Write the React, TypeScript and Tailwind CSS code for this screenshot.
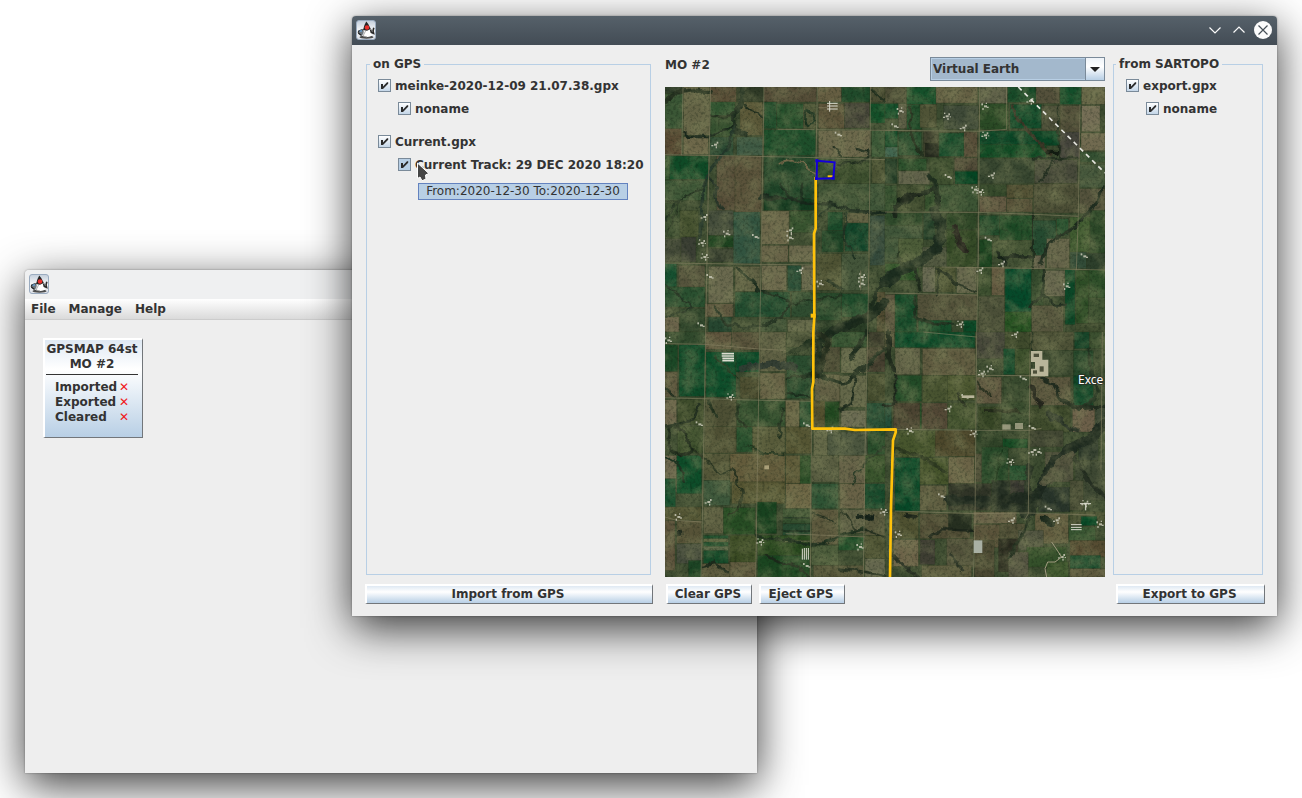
import React from "react";

type Field = [number, number, number, number, string];

// Farm fields: x, y, width, height, colour.
const FIELDS: Field[] = [
  // north-west
  [0, 0, 55, 20, "#2b3a28"], [0, 20, 55, 115, "#3a5635"], [0, 125, 50, 78, "#54442f"], [55, 0, 80, 145, "#656446"], [55, 150, 75, 52, "#6e684a"],
  [135, 0, 80, 45, "#564a34"], [135, 45, 75, 40, "#2f5430"], [135, 90, 75, 60, "#35502f"], [135, 150, 70, 55, "#2b4a33"], [215, 0, 80, 45, "#2f3a26"],
  [225, 45, 68, 100, "#5b5838"], [215, 150, 78, 55, "#3f5a44"], [297, 0, 158, 45, "#544c37"], [297, 45, 38, 80, "#1d4b2a"], [335, 50, 80, 75, "#244f2b"],
  [415, 50, 38, 75, "#4c5436"], [297, 128, 155, 78, "#1e4f2b"], [458, 0, 72, 45, "#665e42"], [530, 0, 85, 45, "#1f4a2a"], [615, 0, 45, 45, "#4a4d33"],
  [460, 50, 78, 75, "#5b5138"], [538, 48, 75, 75, "#454438"], [615, 50, 45, 58, "#145029"], [460, 130, 155, 80, "#6b664a"], [620, 130, 40, 80, "#3d5a38"],
  [0, 207, 130, 70, "#0f4a26"], [0, 207, 14, 70, "#3a5a34"], [0, 280, 125, 60, "#3b5535"], [155, 207, 60, 165, "#544a36"], [210, 207, 80, 170, "#5a523a"],
  [297, 207, 155, 130, "#1f4428"], [297, 335, 150, 35, "#143b20"], [455, 215, 55, 65, "#345030"], [510, 225, 105, 65, "#3d4f2e"], [620, 215, 40, 75, "#4a5233"],
  [460, 290, 155, 80, "#3e5335"], [615, 290, 45, 80, "#405639"], [0, 350, 45, 100, "#35492c"], [45, 370, 55, 80, "#45512f"], [130, 370, 75, 75, "#3e4738"],
  [130, 445, 75, 35, "#1e4420"], [130, 485, 80, 40, "#384030"], [205, 375, 80, 155, "#325440"], [290, 372, 82, 100, "#6c674a"], [375, 372, 75, 65, "#37532f"],
  [290, 475, 80, 50, "#655f45"], [372, 475, 75, 50, "#6b684c"], [488, 375, 45, 55, "#1a4a2a"], [540, 378, 70, 30, "#5e5c40"], [540, 408, 70, 85, "#12452a"],
  [470, 430, 65, 65, "#1f4427"], [615, 385, 45, 150, "#31473a"], [0, 455, 48, 70, "#424837"], [48, 450, 45, 75, "#3a3e33"], [455, 500, 75, 110, "#4e5233"],
  [530, 500, 80, 110, "#44553a"], [0, 530, 35, 70, "#165030"], [40, 535, 80, 78, "#55533c"], [130, 538, 75, 110, "#6a694e"], [210, 538, 75, 75, "#5f6043"],
  [290, 535, 75, 75, "#6c684c"], [368, 535, 40, 78, "#234a34"], [410, 535, 38, 75, "#64634a"], [0, 600, 120, 60, "#2a5030"], [120, 650, 85, 40, "#605940"],
  [210, 615, 165, 75, "#234d30"], [380, 615, 70, 75, "#2f4c30"], [455, 618, 75, 85, "#294a2c"], [530, 620, 80, 70, "#1d4a2a"], [635, 615, 25, 120, "#504a31"],
  [0, 690, 42, 45, "#6a624a"], [45, 665, 75, 70, "#32482d"], [130, 690, 70, 45, "#264630"], [285, 695, 80, 40, "#3f5236"], [368, 698, 78, 37, "#5c6044"],
  [455, 700, 155, 35, "#2a3d26"],
  // north-east
  [660, 0, 65, 48, "#4a4a34"], [725, 0, 88, 52, "#15502a"], [813, 0, 125, 48, "#645f43"], [660, 50, 40, 45, "#0f4d28"], [725, 52, 45, 75, "#204c2a"],
  [765, 52, 50, 70, "#4f5336"], [700, 50, 25, 75, "#5b5c45"], [835, 55, 105, 72, "#3f4a38"], [945, 0, 83, 50, "#5e5f48"], [1028, 0, 85, 46, "#174a28"],
  [945, 50, 85, 78, "#2a4a25"], [1035, 52, 95, 72, "#0e4a29"], [1113, 0, 70, 50, "#54503b"], [1185, 0, 65, 52, "#134e2a"], [1250, 0, 70, 52, "#636244"],
  [1185, 56, 60, 80, "#504d38"], [1250, 56, 55, 78, "#756e56"], [1130, 56, 55, 75, "#474935"], [660, 132, 38, 50, "#0f4a28"], [700, 135, 70, 70, "#2a5030"],
  [660, 180, 38, 30, "#426650"], [775, 132, 45, 78, "#40422f"], [780, 168, 40, 42, "#25291e"], [822, 138, 75, 70, "#174c2b"], [897, 135, 40, 75, "#584e39"],
  [944, 132, 240, 44, "#0a4626"], [944, 172, 200, 40, "#124c25"], [1185, 135, 60, 80, "#45443c"], [1248, 138, 72, 53, "#716a50"], [1245, 195, 75, 30, "#345032"],
  [700, 215, 85, 36, "#2c502c"], [660, 215, 36, 75, "#233d27"], [700, 252, 95, 40, "#60614a"], [795, 212, 70, 80, "#3f5030"], [868, 212, 70, 38, "#4f4836"],
  [870, 253, 68, 38, "#044523"], [943, 215, 165, 75, "#36452f"], [1108, 218, 130, 72, "#47493a"], [1243, 232, 77, 70, "#3f5238"], [660, 295, 35, 78, "#35502f"],
  [698, 293, 80, 80, "#3d4a2d"], [780, 295, 35, 78, "#344f2c"], [820, 293, 118, 80, "#3c5434"], [943, 293, 82, 35, "#34482a"], [1025, 293, 80, 40, "#504e32"],
  [943, 328, 82, 47, "#635942"], [1025, 335, 78, 40, "#585239"], [1106, 290, 135, 88, "#4b4d35"], [1243, 305, 77, 75, "#54523c"], [660, 378, 112, 40, "#2f4a2b"],
  [660, 415, 112, 110, "#3e5438"], [775, 378, 35, 80, "#25412a"], [845, 378, 90, 50, "#2f4727"], [845, 430, 90, 110, "#344926"], [700, 455, 75, 75, "#4c5c38"],
  [772, 480, 73, 60, "#4b523c"], [943, 385, 60, 60, "#224b2b"], [1003, 385, 98, 75, "#1b4824"], [943, 458, 38, 82, "#1c4420"], [983, 460, 115, 50, "#3e4f30"],
  [1103, 400, 70, 105, "#254a30"], [1175, 395, 35, 50, "#25502e"], [1215, 390, 60, 105, "#3e5a2f"], [1275, 370, 45, 130, "#2c4828"], [1105, 505, 35, 40, "#635f4a"],
  [1145, 455, 68, 88, "#636148"], [1215, 495, 50, 50, "#324c38"], [1265, 498, 55, 50, "#2d3f2b"], [772, 540, 40, 75, "#656650"], [812, 540, 60, 75, "#4c5333"],
  [875, 540, 60, 78, "#64644b"], [660, 530, 100, 50, "#2e5228"], [940, 540, 38, 85, "#3b4e2e"], [980, 540, 38, 85, "#62573f"], [1020, 545, 80, 130, "#06492a"],
  [1100, 548, 35, 130, "#31482b"], [1138, 550, 62, 78, "#67664e"], [1200, 548, 30, 165, "#0c4727"], [1232, 550, 40, 160, "#2c4c25"], [1272, 548, 48, 85, "#294b26"],
  [660, 622, 30, 113, "#5a533e"], [690, 622, 65, 113, "#154a29"], [758, 622, 178, 78, "#525039"], [760, 700, 100, 35, "#164c2a"], [895, 700, 40, 35, "#0a4826"],
  [940, 628, 78, 107, "#4b4f38"], [1020, 675, 80, 60, "#22501f"], [1100, 655, 95, 80, "#56553d"], [1232, 710, 88, 25, "#3f4c2f"], [1270, 633, 50, 75, "#3c5030"],
  // south-west
  [0, 735, 120, 36, "#30492c"], [122, 735, 78, 52, "#5e533c"], [200, 735, 82, 54, "#565039"], [285, 735, 78, 118, "#5e5f43"], [365, 735, 80, 45, "#4a5237"],
  [0, 773, 38, 80, "#1b4826"], [42, 773, 78, 155, "#0d4a28"], [123, 795, 90, 135, "#0d4d2a"], [213, 795, 70, 60, "#094a28"], [0, 855, 38, 75, "#5d563e"],
  [285, 858, 75, 78, "#686346"], [225, 870, 58, 65, "#47482c"], [365, 805, 75, 130, "#2a4c2f"], [450, 780, 75, 75, "#4b4a34"], [500, 735, 105, 45, "#31502f"],
  [528, 783, 78, 75, "#65694b"], [610, 735, 50, 45, "#3e3e2d"], [605, 780, 55, 75, "#453f2f"], [450, 862, 75, 80, "#625f44"], [525, 865, 78, 95, "#646749"],
  [608, 860, 52, 82, "#454c2e"], [0, 938, 35, 78, "#6b624a"], [38, 938, 78, 75, "#3e4c2b"], [120, 938, 95, 80, "#4d4f34"], [215, 938, 145, 80, "#2f4d2c"],
  [362, 940, 42, 80, "#6a6646"], [404, 942, 34, 78, "#285030"], [445, 942, 35, 80, "#53502f"], [480, 945, 42, 78, "#20471f"], [528, 970, 73, 50, "#6a6a52"],
  [605, 948, 55, 75, "#274f35"], [38, 1018, 78, 80, "#3d4f2c"], [118, 1018, 95, 80, "#4e4f33"], [215, 1020, 55, 75, "#27502d"], [262, 1020, 98, 82, "#585b3a"],
  [362, 1020, 78, 80, "#555533"], [445, 1025, 75, 85, "#646848"], [488, 1035, 120, 70, "#4c563f"], [608, 1028, 52, 75, "#294d2b"], [0, 1105, 50, 110, "#6d674e"],
  [35, 1105, 75, 115, "#0d4d29"], [115, 1100, 80, 80, "#545638"], [195, 1100, 165, 85, "#635b3b"], [362, 1105, 70, 85, "#5f5b39"], [405, 1105, 35, 100, "#2e5029"],
  [440, 1105, 82, 80, "#595d41"], [522, 1105, 78, 85, "#645f46"], [600, 1105, 60, 82, "#345029"], [0, 1175, 32, 85, "#0f4a2a"], [115, 1180, 80, 75, "#3d573b"],
  [200, 1185, 160, 65, "#565532"], [362, 1190, 78, 75, "#6c6443"], [440, 1190, 80, 75, "#2e5334"], [525, 1190, 75, 75, "#686146"], [600, 1190, 60, 75, "#17492b"],
  [0, 1260, 110, 40, "#4e4f2f"], [35, 1300, 75, 70, "#565237"], [0, 1300, 30, 150, "#5d533c"], [115, 1260, 60, 80, "#5c5d40"], [175, 1262, 95, 80, "#264c23"],
  [275, 1245, 60, 95, "#18421f"], [353, 1265, 83, 45, "#314c2c"], [353, 1310, 83, 35, "#274930"], [440, 1268, 80, 105, "#5b573c"], [525, 1268, 75, 70, "#5e5f45"],
  [600, 1270, 60, 75, "#58583d"], [35, 1370, 75, 60, "#454b3c"], [115, 1345, 75, 85, "#154a29"], [195, 1345, 78, 80, "#3a4a23"], [278, 1345, 160, 60, "#28481e"],
  [115, 1355, 75, 10, "#59603d"], [115, 1378, 75, 12, "#566446"], [355, 1290, 80, 4, "#152d1e"], [355, 1330, 80, 5, "#172f20"], [355, 1360, 80, 6, "#57623f"],
  [440, 1375, 80, 60, "#495a39"], [520, 1350, 78, 40, "#21502a"], [598, 1345, 62, 70, "#4e5333"], [70, 1420, 40, 50, "#1c4424"], [110, 1430, 85, 40, "#58553a"],
  [195, 1425, 78, 45, "#605a3f"], [278, 1405, 155, 65, "#1a4520"], [445, 1435, 150, 35, "#545338"], [600, 1415, 60, 55, "#65674e"],
  // south-east
  [660, 735, 28, 45, "#5b583e"], [690, 735, 240, 47, "#0d4b29"], [935, 735, 85, 80, "#454639"], [1020, 735, 75, 50, "#3f4a2c"], [1095, 735, 130, 55, "#4e5237"],
  [1228, 735, 45, 50, "#174529"], [1275, 735, 45, 50, "#3c5030"], [690, 783, 75, 80, "#626247"], [772, 785, 160, 80, "#605b40"], [1015, 785, 35, 78, "#0d4728"],
  [1050, 785, 45, 78, "#3d502c"], [1095, 790, 130, 75, "#3d4b31"], [1225, 790, 60, 75, "#26482b"], [690, 865, 80, 78, "#224b27"], [772, 865, 75, 80, "#485330"],
  [847, 865, 85, 75, "#4a552e"], [935, 870, 75, 80, "#605740"], [1015, 870, 80, 75, "#384a2e"], [1097, 870, 120, 85, "#5b563e"], [1225, 865, 60, 90, "#0f4829"],
  [660, 948, 20, 75, "#234d38"], [685, 948, 80, 78, "#4b4331"], [765, 948, 22, 78, "#255028"], [770, 948, 78, 78, "#524735"], [848, 948, 85, 78, "#41512d"],
  [940, 960, 70, 68, "#364525"], [1010, 945, 85, 70, "#34482b"], [1095, 960, 120, 75, "#3f4b2c"], [1222, 960, 68, 75, "#6c5f49"], [1290, 960, 30, 55, "#3e4936"],
  [810, 1030, 120, 78, "#4d472b"], [690, 1030, 120, 80, "#47552d"], [935, 1028, 78, 80, "#2f4227"], [1013, 1055, 75, 28, "#164b24"], [1095, 1030, 100, 50, "#424733"],
  [690, 1112, 75, 160, "#074827"], [765, 1112, 85, 80, "#44522a"], [850, 1110, 78, 80, "#6b6346"], [930, 1100, 70, 85, "#4d4c36"], [950, 1080, 80, 110, "#284929"],
  [1033, 1135, 60, 50, "#1e4c2b"], [765, 1195, 80, 75, "#5e5c40"], [850, 1190, 130, 80, "#303427"], [980, 1180, 110, 95, "#263024"], [1035, 1180, 60, 70, "#302f2b"],
  [1140, 1095, 85, 90, "#4d4e3b"], [1120, 1200, 95, 75, "#28342a"], [1240, 1055, 60, 65, "#2e3a2c"], [1230, 1120, 90, 120, "#3e4833"], [1215, 1180, 40, 90, "#484c35"],
  [680, 1275, 80, 80, "#4e5030"], [765, 1280, 150, 75, "#4f4b34"], [850, 1280, 70, 50, "#262f20"], [925, 1275, 130, 35, "#675e46"], [925, 1312, 80, 70, "#585038"],
  [1005, 1310, 75, 75, "#4e4d35"], [1110, 1280, 100, 90, "#625c3f"], [1215, 1275, 105, 40, "#474f31"], [1248, 1288, 48, 28, "#084b27"], [1212, 1320, 80, 42, "#385632"],
  [685, 1358, 75, 80, "#6c6248"], [765, 1358, 45, 75, "#3f3e33"], [845, 1355, 80, 85, "#504f39"], [770, 1435, 150, 35, "#5b593d"], [928, 1360, 60, 110, "#4a4731"],
  [1000, 1355, 60, 100, "#29291e"], [1060, 1330, 75, 60, "#505340"], [1085, 1380, 120, 60, "#34502a"], [1215, 1360, 105, 50, "#564c32"], [1215, 1405, 92, 40, "#14482a"],
  [1215, 1445, 105, 25, "#5e593e"], [1145, 1425, 65, 45, "#3b552b"], [1030, 1395, 60, 75, "#545341"],
];

// Section roads, north to south and west to east.
const ROADS: string[] = [
  "M137 0L128 400L122 735L112 1300L108 1470", "M54 0L50 205", "M297 0L288 530L282 860L272 1470", "M457 0L453 215L448 730L440 960L436 1470",
  "M617 0L612 500L608 735L600 1100L595 1470", "M944 0L940 500L935 735L930 1300L925 1470", "M1095 790L1090 1280L1078 1300", "M1245 52L1240 380L1234 550",
  "M1312 735L1308 1150", "M0 203L130 205L455 212L660 218", "M0 528L290 532L450 534", "M455 128L660 130L940 133L1025 127", "M0 770L120 772L283 786L362 790",
  "M0 932L215 938L437 943", "M660 375L937 376L1105 382L1240 388", "M830 540L1090 544L1320 549", "M660 618L937 624", "M690 1027L930 1030L1095 1030L1130 1024",
  "M935 865L1090 866L1140 868", "M0 1290L35 1300L110 1305", "M690 1272L930 1280L1090 1278L1290 1284", "M362 1340L600 1350", "M775 735L935 750",
  "M338 127L448 128", "M460 62L490 62", "M587 550V610", "M1025 0V128",
];

// Creeks and tree lines: path, width, colour.
const CREEKS: [string, number, string][] = [
  ["M0 45L30 18L80 10L135 15", 12, "#1c291a"], ["M232 0L228 50L205 85L208 130L240 142", 16, "#1b2b1d"], ["M228 50L260 75L292 88M135 85L170 90L205 82", 7, "#1c2b1b"],
  ["M55 132L75 150L125 150L190 125L208 110", 7, "#16251a"], ["M205 125L195 165L165 220L120 270L112 340L105 450", 10, "#23362a"], ["M130 270L155 300L150 330L170 365", 8, "#263428"],
  ["M0 400L35 350L70 325L115 305", 6, "#233422"], ["M0 345L45 345L5 450", 4, "#263522"], ["M285 330L375 335L420 345L500 348L560 372L660 380", 10, "#16261b"],
  ["M350 290L372 330M410 295L415 340", 8, "#162a1b"], ["M340 230Q370 210 410 230L450 260", 5, "#78694b"], ["M420 110L425 70L445 80L450 105L430 120Z", 8, "#17301f"],
  ["M500 180L530 210M575 180L612 190L610 215L560 230L520 228", 7, "#1c2a1c"], ["M625 8L660 42", 6, "#1f2e1e"], ["M215 540L235 560L255 575L280 605L340 625L375 650L350 690L300 715L240 725L185 710L145 660", 8, "#1b2c1d"],
  ["M0 595L30 605L50 640L85 660L0 690", 5, "#203022"], ["M375 650L440 640L530 625", 6, "#1e301f"], ["M465 390L500 355M545 380L535 450L570 515", 7, "#1e3122"],
  ["M660 645L610 690L520 725L460 765L455 860", 26, "#19281b"], ["M490 580L530 610M655 580L600 700L560 720", 12, "#1e2c1d"], ["M455 740L490 755L470 830L450 860", 14, "#222b1c"],
  ["M605 735L580 780L555 810M660 780L600 840L530 890L470 870", 12, "#1d2c1e"], ["M570 870L560 950L525 970", 8, "#1c2a1c"], ["M370 800L420 780L440 760", 16, "#20301f"],
  ["M370 870L440 865M365 920L440 930", 8, "#1b2d1d"], ["M235 845L330 830L390 845", 22, "#303c33"], ["M0 905L30 930M0 1020L45 1010L80 1000L100 950", 9, "#1b291b"],
  ["M15 1020L10 1080L50 1110L80 1090L60 1040L35 1020", 9, "#192618"], ["M85 1090L125 1120L160 1160L200 1150L235 1220L220 1270L190 1290", 6, "#26321f"], ["M130 940L150 990M215 950L220 1000L245 1020M355 970L340 1050", 8, "#202f1e"],
  ["M0 1110L40 1130L60 1190", 8, "#1a3220"], ["M250 1075L290 1100L360 1102M150 810L215 870", 5, "#22351f"], ["M660 1080L610 1120L570 1160L560 1190", 5, "#283a26"],
  ["M270 1348L440 1372L480 1370L530 1345L600 1328", 8, "#1a2d1c"], ["M530 1270L570 1330M600 1330L660 1350M440 1275L520 1310", 5, "#252f20"], ["M580 1285L620 1290", 16, "#111d16"],
  ["M110 1440L150 1430L190 1455M300 1405L340 1425L400 1440L430 1470M520 1445L600 1455L660 1465", 8, "#1b281a"], ["M45 1335V1340", 14, "#141f16"],
  ["M735 60L740 140L770 205", 8, "#24301f"], ["M690 390L690 360L760 320L810 305L820 360", 14, "#1a261a"], ["M790 265L815 300L815 480", 12, "#202f20"],
  ["M810 370L830 420L820 480L770 520L720 545L660 585", 34, "#1b2b1f"], ["M700 340L760 320", 16, "#141e15"], ["M870 420L880 460L905 490", 16, "#26231c"],
  ["M750 545L765 610M810 545L840 555L870 590L930 615M815 550L820 620", 8, "#202b1d"], ["M700 500L710 535L740 545", 8, "#1f2e1e"], ["M1042 60L1075 120L1130 170L1160 205", 10, "#3c3626"],
  ["M1150 195H1175", 14, "#101810"], ["M1165 225L1125 290M1105 215L1240 215", 6, "#1e2a1d"], ["M1104 380V545", 6, "#1c2a1b"], ["M1320 300L1285 360L1230 420L1150 470L1130 530", 10, "#1c2a1d"],
  ["M1015 510L1100 510M1000 500L1020 515L1015 535", 10, "#172319"], ["M1135 550V620L1100 655M1135 620L1170 655L1195 655", 9, "#17261a"], ["M755 630L750 690L800 710L860 715", 10, "#1d2e1d"],
  ["M1180 55L1185 210", 5, "#1e2b1c"], ["M670 735V800L685 850", 16, "#1d281b"], ["M1130 870L1165 890L1190 940L1240 965L1320 960", 9, "#1f2a1e"], ["M1275 785V830L1300 920L1260 960", 9, "#1d2f1f"],
  ["M1100 900L1125 955", 14, "#23241b"], ["M660 960L690 945L690 865", 8, "#172218"], ["M1320 1010L1280 1050L1210 1090L1160 1140L1110 1240L1080 1275", 34, "#1c281f"],
  ["M1140 1185L1190 1125L1220 1105", 24, "#504f3c"], ["M1150 980L1190 1010L1240 1030", 14, "#242e25"], ["M1090 1140L1085 1250L1100 1270", 20, "#202b20"], ["M1230 1110L1270 1180L1320 1230", 10, "#252e22"],
  ["M850 1240L980 1245L1090 1230", 30, "#202a20"], ["M960 970L1060 975", 10, "#222818"], ["M690 1085L765 1110L840 1150", 12, "#2b371f"], ["M720 1285L760 1290M800 1350L830 1325L920 1330", 10, "#1a2319"],
  ["M1095 1285L1080 1330L1050 1380L1035 1410", 9, "#1f2c1e"], ["M1140 1295L1155 1305", 28, "#172519"], ["M680 1400L720 1440L760 1470M855 1405L890 1445", 10, "#222a20"],
  ["M1010 1090L990 1190", 6, "#173419"], ["M880 920L900 960M940 890L975 930", 6, "#242c1c"], ["M1100 735V860", 5, "#253321"],
];

// Farmsteads: centre of each cluster of roofs.
const FARMS: [number, number][] = [
  [520, 143], [118, 390], [185, 440], [110, 468], [272, 450], [375, 430], [375, 452], [590, 570], [135, 570], [405, 550], [465, 590], [118, 510], [108, 715], [150, 173],
  [706, 72], [845, 88], [690, 118], [895, 122], [960, 58], [960, 145], [850, 270], [980, 265], [930, 308], [945, 315], [970, 458], [1010, 530], [1205, 598], [885, 712],
  [1258, 508], [945, 550], [10, 760], [195, 930], [103, 1012], [130, 1245], [40, 1290], [285, 1365], [425, 1015], [495, 1028], [585, 1380], [655, 1275], [425, 1437], [1050, 742],
  [975, 845], [950, 860], [900, 930], [850, 965], [735, 1032], [925, 1040], [1075, 875], [1100, 1095], [1120, 1095], [1035, 1125], [830, 1228], [1040, 1300], [700, 1342],
  [1260, 1250], [1150, 1265], [1175, 1300], [1305, 1312], [1190, 1410], [1102, 1023], [1095, 42], [590, 590],
];

const ROOFS: [number, number, number, number][] = [
  [0, 0, 9, 6], [8, -6, 5, 6], [-8, 4, 6, 4], [5, 8, 4, 6], [-5, -8, 4, 4], [12, 3, 4, 3], [-2, 11, 5, 3],
];

function SatelliteMap() {
  return (
    <svg
      viewBox="0 0 1320 1470"
      preserveAspectRatio="xMidYMid slice"
      className="block min-h-0 w-full flex-1 bg-[#3b4a2f]"
      role="img"
      aria-label="Satellite map"
    >
      <defs>
        <filter id="rough" x="0" y="0" width="100%" height="100%" colorInterpolationFilters="sRGB">
          <feTurbulence type="fractalNoise" baseFrequency="0.03" numOctaves="3" seed="4" result="n" />
          <feDisplacementMap in="SourceGraphic" in2="n" scale="24" xChannelSelector="R" yChannelSelector="G" />
        </filter>
        <filter id="grain" x="0" y="0" width="100%" height="100%" colorInterpolationFilters="sRGB">
          <feTurbulence type="fractalNoise" baseFrequency="0.12" numOctaves="3" seed="9" />
          <feColorMatrix values="0 0 0 0 0.05  0 0 0 0 0.1  0 0 0 0 0.05  0.8 0 0 0 -0.36" />
        </filter>
        <filter id="mottle" x="0" y="0" width="100%" height="100%" colorInterpolationFilters="sRGB">
          <feTurbulence type="fractalNoise" baseFrequency="0.02" numOctaves="5" seed="21" />
          <feColorMatrix values="0 0 0 0 0.5  0 0 0 0 0.52  0 0 0 0 0.36  0 1.1 0 0 -0.4" />
        </filter>
      </defs>
      <rect width="1320" height="1470" fill="#3b4a2f" />
      {FIELDS.map(([x, y, w, h, c], i) => (
        <rect key={i} x={x} y={y} width={w} height={h} fill={c} stroke="#29381f" strokeOpacity="0.45" strokeWidth="2" />
      ))}
      <g fill="none" strokeLinecap="round" strokeLinejoin="round" filter="url(#rough)">
        {CREEKS.map(([d, w, c], i) => (
          <path key={i} d={d} strokeWidth={w} stroke={c} strokeOpacity="0.95" />
        ))}
      </g>
      <rect width="1320" height="1470" filter="url(#mottle)" />
      <rect width="1320" height="1470" filter="url(#grain)" />
      <g fill="none" stroke="#858163" strokeWidth="3" strokeOpacity="0.6">
        {ROADS.map((d, i) => (
          <path key={i} d={d} />
        ))}
      </g>

      <g fill="#c9c8b6" fillOpacity="0.85">
        {FARMS.map(([x, y], i) =>
          ROOFS.slice(0, 3 + (i % 4)).map(([dx, dy, w, h], j) => (
            <rect key={`${i}-${j}`} x={x + (i % 2 ? dx : -dx) - 3} y={y + dy - 3} width={w} height={h} />
          )),
        )}
      </g>
      <g fill="none" stroke="#dcdccf" strokeWidth="3">
        <path d="M486 49H518M486 57H518M486 66H518M494 42V74" />
        <path d="M412 1385V1418M418 1383V1418M424 1383V1418M430 1383V1418" />
        <path d="M170 800H207M170 807H207M172 814H207M172 821H207" strokeWidth="5" />
        <path d="M1218 1313H1250M1218 1321H1250M1218 1328H1250" />
        <path d="M1245 1250H1278M1262 1250V1270" />
        <path d="M1190 1410L1170 1425H1148L1140 1445L1145 1470M1190 1410L1160 1365" stroke="#a19c80" />
      </g>
      <g fill="#b9b59a">
        <path d="M1098 792H1132V818H1150V868H1098V845H1110V825H1098Z" />
        <rect x="1012" y="1012" width="25" height="16" fillOpacity="0.7" />
        <rect x="1050" y="1008" width="24" height="18" fillOpacity="0.7" />
        <rect x="926" y="1360" width="26" height="38" fill="#a9b0a4" />
        <rect x="298" y="1135" width="14" height="12" fill="#a99f78" />
        <rect x="890" y="925" width="38" height="8" />
      </g>
      <g fill="#4d4f3a">
        <rect x="1106" y="800" width="16" height="10" />
        <rect x="1104" y="850" width="12" height="10" />
        <rect x="1124" y="838" width="12" height="16" />
      </g>
      <path d="M1060 0L1320 258" fill="none" stroke="#e6e6df" strokeWidth="5" strokeDasharray="14 12" />

      <text
        x="1239"
        y="892"
        fontSize="36"
        fontWeight="400"
        fontFamily="'Noto Sans', sans-serif"
        fill="#fff"
        stroke="#2b2f24"
        strokeWidth="5"
        paintOrder="stroke"
      >
        Exce
      </text>

      <g fill="none" stroke="#ffc20a" strokeWidth="8" strokeLinejoin="round">
        <path d="M452 270L452 425L447 440L448 690L445 735L445 885L441 905L442 1025H540L570 1029L692 1027L692 1036L684 1060L678 1260L676 1400L675 1470" />
        <path d="M437 686H452" strokeWidth="12" />
        <path d="M488 268H506" strokeWidth="6" />
      </g>
      <path d="M456 221L509 226L505 274L455 275Z" fill="none" stroke="#1400d8" strokeWidth="6" />
      <path d="M451 217h9v9h-9zM450 270h9v9h-9zM500 269h9v9h-9z" fill="#1400d8" />
    </svg>
  );
}

function DukeIcon() {
  return (
    <svg viewBox="0 0 20 20" className="size-5 shrink-0" aria-hidden="true">
      <defs>
        <linearGradient id="tile" x1="0" y1="0" x2="0" y2="1">
          <stop offset="0" stopColor="#c3cedb" />
          <stop offset="0.5" stopColor="#f4f5f7" />
          <stop offset="1" stopColor="#dde1e8" />
        </linearGradient>
      </defs>
      <rect x="0.5" y="0.5" width="19" height="19" rx="2.5" fill="url(#tile)" stroke="#9aabbf" />
      <ellipse cx="10.500" cy="17.200" rx="7" ry="1.600" fill="#4c4c4c" />
      <path d="M2 10.500L7 9L8.500 13L5.500 15.500L2.500 14Z" fill="#6f777e" />
      <path d="M2 12.500Q3.500 9.500 6.500 10.200M2.300 13L5.500 15.500" fill="none" stroke="#222" strokeWidth="1.200" />
      <path d="M3.500 11.300L6 10.800" stroke="#6aa0d0" strokeWidth="1.400" />
      <path d="M8 10L14.500 9L16 15.500Q13 18 7 16Z" fill="#fff" />
      <path d="M9.800 10.500L7 16L11 17" fill="none" stroke="#999" strokeWidth="0.800" />
      <path d="M10.300 1.500Q12.500 3.500 14.800 9L11 10.800L7 10Q8 5 10.300 1.500Z" fill="#232323" />
      <path d="M17.800 7.800L17 11L17.600 13.500L15.300 12.500L14.600 9.500" fill="none" stroke="#2a2a2a" strokeWidth="1.600" />
      <circle cx="11" cy="7.500" r="2.300" fill="#e8302c" />
    </svg>
  );
}

function CheckItem({ id, label, nested, hot }: { id: string; label: string; nested?: boolean; hot?: boolean }) {
  return (
    <div className={nested ? "flex h-[23px] items-center gap-1 pl-5" : "flex h-[23px] items-center gap-1"}>
      <span className="relative size-[13px] shrink-0">
        <input
          id={id}
          type="checkbox"
          defaultChecked
          className={
            hot
              ? "peer block size-[13px] appearance-none border border-[#7a8a99] bg-[#b8cfe5]"
              : "peer block size-[13px] appearance-none border border-[#7a8a99] bg-linear-to-b from-white to-[#c4d6e8]"
          }
        />
        <svg viewBox="0 0 13 13" className="pointer-events-none absolute inset-0 hidden peer-checked:block" aria-hidden="true">
          <path d="M3 5H5V7.500L9 3.300H10.200V4.800L5 10H3Z" fill="#2a2a2a" />
        </svg>
      </span>
      <label htmlFor={id} className="whitespace-nowrap">
        {label}
      </label>
    </div>
  );
}

function PlainButton({ children, className }: { children: string; className: string }) {
  return (
    <button
      type="button"
      className={`h-5 whitespace-nowrap border-2 border-r border-b border-t-white border-l-white border-r-[#72767a] border-b-[#72767a] bg-linear-to-b from-[#dfe9f3] via-white via-35% to-[#b8cfe5] pr-[3px] leading-[15px] ${className}`}
    >
      {children}
    </button>
  );
}

function DeviceButton() {
  return (
    <button
      type="button"
      className="flex h-[100px] w-[100px] flex-col border-2 border-r border-b border-t-white border-l-white border-r-[#72767a] border-b-[#72767a] bg-linear-to-b from-[#dfe9f3] via-white via-30% to-[#b8cfe5] leading-[15px]"
    >
      <span className="block w-full pt-0.5 pr-[3px] text-center whitespace-nowrap">
        GPSMAP 64st
        <br />
        MO #2
      </span>
      <span className="mt-0.5 mb-[5px] ml-px block h-px w-[92px] bg-[#333]" />
      <span className="ml-2.5 grid grid-cols-[64px_auto] text-left">
        {["Imported", "Exported", "Cleared"].map((s) => (
          <React.Fragment key={s}>
            <span>{s}</span>
            <span className="font-normal text-[#f01818]">✕</span>
          </React.Fragment>
        ))}
      </span>
    </button>
  );
}

const SHADOW = "shadow-[0_0_2px_rgba(0,0,0,0.4),0_12px_44px_rgba(0,0,0,0.78)]";

export default function App() {
  return (
    <div className="relative h-screen w-full overflow-hidden bg-white font-['DejaVu_Sans',sans-serif] text-xs font-bold text-[#333]">
      <section className={`absolute top-[270px] right-[545px] bottom-[25px] left-[25px] flex flex-col rounded-t bg-[#eee] ${SHADOW}`}>
        <header className="flex h-[29px] shrink-0 items-center rounded-t bg-[#eff0f1] pb-px pl-1">
          <DukeIcon />
        </header>
        <nav className="flex h-[21px] shrink-0 items-center gap-[13px] border-b border-[#ccc] bg-linear-to-b from-white to-[#dadada] pl-1.5">
          <button type="button">File</button>
          <button type="button">Manage</button>
          <button type="button">Help</button>
        </nav>
        <main className="flex-1 p-[18px]">
          <DeviceButton />
        </main>
      </section>

      <section className={`absolute top-4 right-[25px] bottom-[182px] left-[352px] flex flex-col rounded-t bg-[#eee] ${SHADOW}`}>
        <header className="flex h-[29px] shrink-0 items-center justify-between rounded-t bg-linear-to-b from-[#56616a] to-[#434c55] pr-[5px] pb-px pl-1">
          <DukeIcon />
          <div className="flex items-center gap-1.5">
            <button type="button" aria-label="Minimize" className="size-[18px]">
              <svg viewBox="0 0 18 18" fill="none" stroke="#fcfcfc" strokeWidth="1.200"><path d="M3.500 6.500L9 12L14.500 6.500" /></svg>
            </button>
            <button type="button" aria-label="Maximize" className="size-[18px]">
              <svg viewBox="0 0 18 18" fill="none" stroke="#fcfcfc" strokeWidth="1.200"><path d="M3.500 11.500L9 6L14.500 11.500" /></svg>
            </button>
            <button type="button" aria-label="Close" className="size-[18px]">
              <svg viewBox="0 0 18 18"><circle cx="9" cy="9" r="9" fill="#fcfcfc" /><path d="M4.500 4.500L13.500 13.500M13.500 4.500L4.500 13.500" stroke="#475057" strokeWidth="1.200" /></svg>
            </button>
          </div>
        </header>

        <div className="flex min-h-0 flex-1 px-[14px] pt-3">
          <fieldset className="mr-[14px] mb-0.5 w-[285px] border border-[#b8cfe5] pl-[11px]">
            <legend className="-ml-2 px-[3px] leading-[15px]">on GPS</legend>
            <div className="flex flex-col gap-2.5 pt-0.5">
              <div>
                <CheckItem id="meinke" label="meinke-2020-12-09 21.07.38.gpx" />
                <CheckItem id="meinke-noname" label="noname" nested />
              </div>
              <div className="relative">
                <CheckItem id="current" label="Current.gpx" />
                <CheckItem id="current-track" label="Current Track: 29 DEC 2020 18:20" nested hot />
                <div role="tooltip" className="absolute top-[53px] left-10 w-[210px] border border-[#6382bf] bg-[#b8cfe5] text-center leading-[15px] font-normal whitespace-nowrap">
                  From:2020-12-30 To:2020-12-30
                </div>
                <svg viewBox="0 0 14 20" className="absolute top-[32px] left-[38px] h-5 w-3.5" aria-hidden="true">
                  <path d="M1.500 1L12.800 11.500L9.500 13L10 17L6 18.800L4 15L1.500 16.500Z" fill="#454545" stroke="#fff" strokeWidth="1" />
                </svg>
              </div>
            </div>
          </fieldset>

          <div className="mr-2 flex min-w-0 flex-1 flex-col gap-1.5">
            <div className="flex h-6 shrink-0 justify-between">
              <h1 className="leading-4">MO #2</h1>
              <div className="relative w-[175px]">
                <select
                  aria-label="Map source"
                  defaultValue="Virtual Earth"
                  className="block h-6 w-full appearance-none rounded-none border border-[#7a8a99] bg-[#a3b8cc] pl-0.5 font-bold outline-1 -outline-offset-2 outline-[#b8cfe5]"
                >
                  <option>Virtual Earth</option>
                </select>
                <span className="pointer-events-none absolute inset-y-0 right-0 flex w-5 items-center justify-center border border-[#7a8a99] bg-linear-to-b from-[#eef3f8] via-white via-40% to-[#b8cfe5]">
                  <svg viewBox="0 0 10 5" className="h-[5px] w-2.5" aria-hidden="true"><path d="M0 0H10L5 5Z" fill="#222" /></svg>
                </span>
              </div>
            </div>
            <SatelliteMap />
          </div>

          <fieldset className="mb-0.5 w-[150px] border border-[#b8cfe5] pl-3">
            <legend className="-ml-2.5 px-[3px] leading-[15px]">from SARTOPO</legend>
            <div className="pt-0.5">
              <CheckItem id="export" label="export.gpx" />
              <CheckItem id="export-noname" label="noname" nested />
            </div>
          </fieldset>
        </div>

        <footer className="flex shrink-0 gap-[7px] pt-[7px] pr-3 pb-3 pl-[13px]">
          <PlainButton className="mr-1.5 w-[288px]">Import from GPS</PlainButton>
          <PlainButton className="w-[86px]">Clear GPS</PlainButton>
          <PlainButton className="w-[86px]">Eject GPS</PlainButton>
          <PlainButton className="ml-auto w-[149px]">Export to GPS</PlainButton>
        </footer>
      </section>
    </div>
  );
}
